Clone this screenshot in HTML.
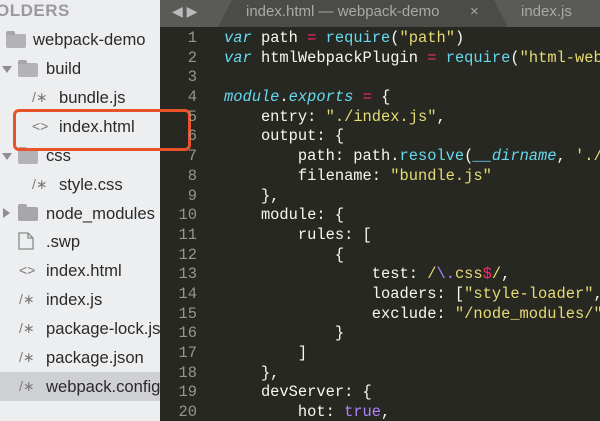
<!DOCTYPE html>
<html><head><meta charset="utf-8"><style>
*{margin:0;padding:0;box-sizing:border-box}
body{width:600px;height:421px;overflow:hidden;position:relative;background:#272822;font-family:"Liberation Sans",sans-serif}
#side{position:absolute;left:0;top:0;width:160px;height:421px;background:#edeef0;overflow:hidden}
.hdr{position:absolute;left:-4px;top:1px;font-size:17px;font-weight:bold;color:#9a9a9c;letter-spacing:.5px}
.row{position:absolute;left:0;width:160px;height:29px;font-size:16.6px;color:#2a2a2a;line-height:29px;white-space:nowrap}
.row span{position:absolute}
.ic{color:#7a7a7a;font-size:14px}
.fold{position:absolute;width:20px;height:14px;background:#a7a7a9;border-radius:2px}
.fold:before{content:"";position:absolute;left:0;top:-3px;width:9px;height:4px;background:#a7a7a9;border-radius:2px 2px 0 0}
.fold.o{background:#b3b3b5}
.tri{position:absolute;width:0;height:0}
.tri.d{border-left:5px solid transparent;border-right:5px solid transparent;border-top:7px solid #8e8e90}
.tri.r{border-top:5px solid transparent;border-bottom:5px solid transparent;border-left:7px solid #8e8e90}
#tabs{position:absolute;left:160px;top:0;width:440px;height:27px;background:#5a5a57;overflow:hidden}
#tab{position:absolute;left:58px;top:0;width:290px;height:27px;background:#4b4b48;clip-path:polygon(14px 0,276px 0,290px 27px,0 27px)}
.tt{position:absolute;top:3px;font-size:15px;color:#a9a9a6;white-space:nowrap}
#ed{position:absolute;left:160px;top:29px;width:440px;height:392px;overflow:hidden;font-family:"Liberation Mono",monospace;font-size:15.4px;line-height:19.68px;color:#f8f8f2}
.ln{position:absolute;left:0;width:37px;text-align:right;color:#95968f}
.cd{position:absolute;left:64px;white-space:pre}
.k{color:#66d9ef;font-style:italic}.f{color:#66d9ef}.s{color:#e6db74}.p{color:#f92672}.v{color:#ae81ff}
#box{position:absolute;left:13px;top:109px;width:178px;height:42px;border:3px solid #e8532a;border-radius:6px}
</style></head><body>
<div id="side">
<div class="hdr">OLDERS</div>
<div class="fold o" style="left:6px;top:34px"></div><div class="row" style="top:25px"><span style="left:33px">webpack-demo</span></div>
<div class="tri d" style="left:2px;top:66px"></div><div class="fold o" style="left:18px;top:63px"></div><div class="row" style="top:54px"><span style="left:46px">build</span></div>
<div class="row" style="top:83px"><span class="ic" style="left:32px">/∗</span><span style="left:59px">bundle.js</span></div>
<div class="row" style="top:112px"><span class="ic" style="left:32px">&lt;&gt;</span><span style="left:59px">index.html</span></div>
<div class="tri d" style="left:2px;top:153px"></div><div class="fold o" style="left:18px;top:150px"></div><div class="row" style="top:141px"><span style="left:46px">css</span></div>
<div class="row" style="top:170px"><span class="ic" style="left:32px">/∗</span><span style="left:59px">style.css</span></div>
<div class="tri r" style="left:3px;top:208px"></div><div class="fold" style="left:18px;top:207px"></div><div class="row" style="top:199px"><span style="left:46px">node_modules</span></div>
<svg style="position:absolute;left:18px;top:232px" width="16" height="18"><path d="M1 1H10L15 6V17H1Z M10 1V6H15" fill="none" stroke="#8a8a8a" stroke-width="1.3"/></svg>
<div class="row" style="top:227px"><span style="left:46px">.swp</span></div>
<div class="row" style="top:256px"><span class="ic" style="left:19px">&lt;&gt;</span><span style="left:46px">index.html</span></div>
<div class="row" style="top:285px"><span class="ic" style="left:19px">/∗</span><span style="left:46px">index.js</span></div>
<div class="row" style="top:314px"><span class="ic" style="left:19px">/∗</span><span style="left:46px">package-lock.json</span></div>
<div class="row" style="top:343px"><span class="ic" style="left:19px">/∗</span><span style="left:46px">package.json</span></div>
<div class="row" style="top:372px;background:#cfd0d4"><span class="ic" style="left:19px">/∗</span><span style="left:46px">webpack.config.js</span></div>
</div>
<div id="box"></div>
<div id="tabs"><div id="tab"></div>
<div class="tt" style="left:12px;color:#bbb;font-size:14px">◀ ▶</div>
<div class="tt" style="left:86px">index.html — webpack-demo</div>
<div class="tt" style="left:310px">×</div>
<div class="tt" style="left:361px">index.js</div>
</div>
<div id="ed">
<div class="ln">1<br>2<br>3<br>4<br>5<br>6<br>7<br>8<br>9<br>10<br>11<br>12<br>13<br>14<br>15<br>16<br>17<br>18<br>19<br>20</div>
<div class="cd"><span class="k">var</span> path <span class="p">=</span> <span class="f">require</span>(<span class="s">"path"</span>)
<span class="k">var</span> htmlWebpackPlugin <span class="p">=</span> <span class="f">require</span>(<span class="s">"html-webpack-plugin"</span>)

<span class="k">module</span>.<span class="k">exports</span> <span class="p">=</span> {
    entry: <span class="s">"./index.js"</span>,
    output: {
        path: path.<span class="f">resolve</span>(<span class="k">__dirname</span>, <span class="s">'./build'</span>),
        filename: <span class="s">"bundle.js"</span>
    },
    module: {
        rules: [
            {
                test: <span class="s">/</span><span class="v">\.</span><span class="s">css</span><span class="p">$</span><span class="s">/</span>,
                loaders: [<span class="s">"style-loader"</span>, <span class="s">"css-loader"</span>],
                exclude: <span class="s">"/node_modules/"</span>
            }
        ]
    },
    devServer: {
        hot: <span class="v">true</span>,</div>
</div>
</body></html>
